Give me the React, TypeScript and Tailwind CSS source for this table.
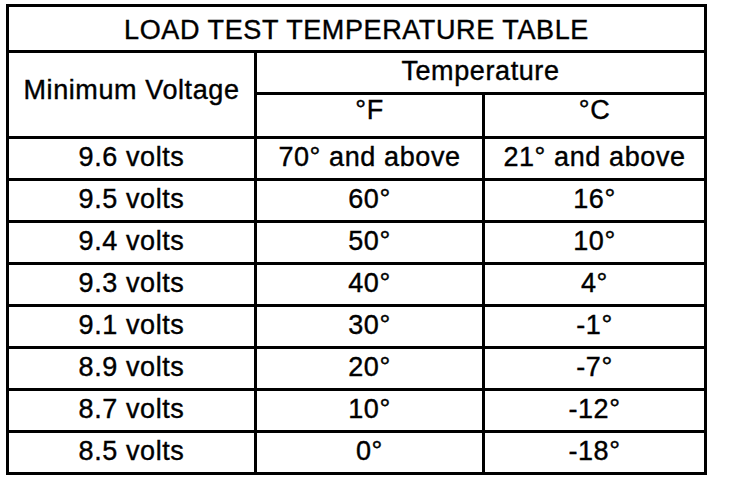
import React from "react";

const rows: [string, string, string][] = [
  ["9.6 volts", "70° and above", "21° and above"],
  ["9.5 volts", "60°", "16°"],
  ["9.4 volts", "50°", "10°"],
  ["9.3 volts", "40°", "4°"],
  ["9.1 volts", "30°", "-1°"],
  ["8.9 volts", "20°", "-7°"],
  ["8.7 volts", "10°", "-12°"],
  ["8.5 volts", "0°", "-18°"],
];

export default function App() {
  return (
    <div
      className="w-[736px] h-[484px] bg-white text-black overflow-hidden"
      style={{ fontFamily: '"Liberation Sans", Arial, sans-serif' }}
    >
      <div className="ml-[6px] mt-[4px] w-[701px] border-[3px] border-black text-[27px] leading-none tracking-[0.6px] [-webkit-text-stroke:0.4px_black]">
        <div className="h-[43px] flex items-center justify-center pt-[3px]">
          LOAD TEST TEMPERATURE TABLE
        </div>
        <div className="flex h-[86px] border-t-[3px] border-black">
          <div className="w-[245px] flex items-center justify-center pb-[8px]">
            Minimum Voltage
          </div>
          <div className="w-[450px] flex flex-col border-l-[3px] border-black">
            <div className="h-[39px] flex items-center justify-center pb-[2px]">Temperature</div>
            <div className="flex flex-1 border-t-[3px] border-black">
              <div className="w-[225px] flex items-center justify-center pb-[10px]">°F</div>
              <div className="w-[222px] flex items-center justify-center border-l-[3px] border-black pb-[10px]">
                °C
              </div>
            </div>
          </div>
        </div>
        {rows.map((r, i) => (
          <div key={i} className="flex h-[42px] border-t-[3px] border-black">
            <div className="w-[245px] flex items-center justify-center pb-[3px]">{r[0]}</div>
            <div className="w-[228px] flex items-center justify-center border-l-[3px] border-black pb-[3px]">
              {r[1]}
            </div>
            <div className="w-[222px] flex items-center justify-center border-l-[3px] border-black pb-[3px]">
              {r[2]}
            </div>
          </div>
        ))}
      </div>
    </div>
  );
}
